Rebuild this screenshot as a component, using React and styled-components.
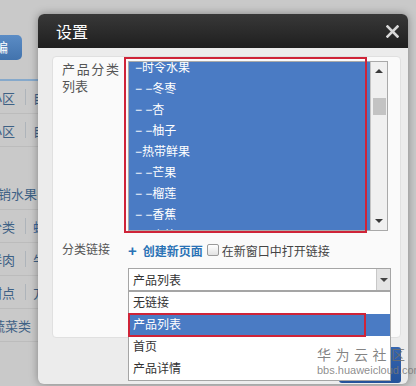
import styled, { createGlobalStyle } from "styled-components";

const FONT = `"Liberation Sans", "Noto Sans CJK SC", sans-serif`;
const BLUE = "#4a7bc4";

const GlobalStyle = createGlobalStyle`
  html, body { margin: 0; padding: 0; }
  body { background: #c9c9c9; font-family: ${FONT}; }
  * { box-sizing: border-box; }
`;

const Stage = styled.div`
  position: relative;
  width: 416px;
  height: 386px;
  overflow: hidden;
  background: #c9c9c9;
`;

// === page behind the dialog (dimmed) ===
const BackPage = styled.div`
  width: 38px;
  padding-top: 35px;
  overflow: hidden;
  font-size: 13px;
  color: #3e6185;
`;
const BackButton = styled.div`
  width: 22px;
  height: 25px;
  border-radius: 0 5px 5px 0;
  background: linear-gradient(#5b8cc5, #4273ad);
  color: #fff;
  line-height: 25px;
  text-indent: -5px;
  overflow: hidden;
  white-space: nowrap;
`;
const BackLine = styled.div`
  margin-top: 19px;
  height: 2px;
  background: #86a9cb;
`;
const BackRow = styled.div`
  height: ${(p) => p.$h || 33}px;
  display: flex;
  align-items: center;
  white-space: nowrap;
  border-bottom: ${(p) => (p.$plain ? "0" : "1px solid #bcbcbc")};
`;
const BackLead = styled.div`
  width: 15px;
  flex-shrink: 0;
  display: flex;
  justify-content: flex-end;
  overflow: hidden;
`;
const BackDivider = styled.div`
  width: 1px;
  height: 16px;
  flex-shrink: 0;
  margin: 0 7px 0 10px;
  background: #aeb4ba;
`;
const BackText = styled.span`
  margin-left: ${(p) => p.$shift || 0}px;
  color: ${(p) => p.$color || "inherit"};
`;

// === dialog ===
const Modal = styled.div`
  position: absolute;
  left: 38px;
  top: 14px;
  width: 370px;
  height: 370px;
  display: flex;
  flex-direction: column;
  border-radius: 6px;
  background: #ececec;
  box-shadow: 0 0 8px rgba(0, 0, 0, 0.35);
`;
const Header = styled.div`
  height: 34px;
  flex-shrink: 0;
  display: flex;
  align-items: center;
  justify-content: space-between;
  padding: 0 9px 0 18px;
  border-radius: 6px 6px 0 0;
  background: linear-gradient(#383838, #1f1f1f);
  color: #fff;
  font-size: 16px;
`;
const Body = styled.div`
  flex: 1;
  display: flex;
  flex-direction: column;
  padding: 8px 7px 0 14px;
`;
const Panel = styled.div`
  height: 282px;
  padding: 4px 0 0 9px;
  background: #fafafa;
  border: 1px solid #e0e0e0;
  border-radius: 4px;
`;
const FormRow = styled.div`
  display: flex;
  align-items: ${(p) => (p.$center ? "center" : "flex-start")};
  column-gap: 9px;
  margin-top: ${(p) => p.$gap || 0}px;
  height: ${(p) => (p.$h ? `${p.$h}px` : "auto")};
`;
const Label = styled.div`
  width: 57px;
  flex-shrink: 0;
  font-size: ${(p) => p.$size || 12}px;
  line-height: 17px;
  color: #555;
  text-align: justify;
`;

// multi-select list
const Listbox = styled.div`
  position: relative;
  width: 260px;
  height: 170px;
  display: flex;
  border: 1px solid #a9a9a9;
  background: #fff;
`;
const Options = styled.div`
  flex: 1;
  overflow: hidden;
  background: ${BLUE};
`;
const OptionsInner = styled.div`
  margin-top: -4px;
`;
const ListOption = styled.div`
  height: 21px;
  line-height: 21px;
  padding-left: 6px;
  color: #fff;
  font-size: 12px;
  white-space: pre;
`;
const ScrollTrack = styled.div`
  width: 17px;
  display: flex;
  flex-direction: column;
  align-items: center;
  background: #f0f0f0;
  border-left: 1px solid #c4c4c4;
`;
const ScrollArrow = styled.div`
  height: 18px;
  width: 100%;
  display: flex;
  align-items: center;
  justify-content: center;
  &::after {
    content: "";
    border-left: 4px solid transparent;
    border-right: 4px solid transparent;
    border-${(p) => (p.$down ? "top" : "bottom")}: 4px solid #3a3a3a;
  }
`;
const ScrollThumb = styled.div`
  margin-top: 18px;
  width: 13px;
  height: 17px;
  background: #c3c3c3;
`;
const ScrollFill = styled.div`
  flex: 1;
`;
const Annotation = styled.div`
  position: absolute;
  left: ${(p) => p.$l}px;
  top: ${(p) => p.$t}px;
  width: ${(p) => p.$w}px;
  height: ${(p) => p.$h}px;
  border: 2px solid #cf2438;
  pointer-events: none;
`;

// link row
const LinkBar = styled.div`
  display: flex;
  align-items: center;
  font-size: 12px;
  white-space: nowrap;
`;
const Plus = styled.span`
  color: #2a72b5;
  font-size: 15px;
  font-weight: bold;
  margin-right: 6px;
`;
const CreateLink = styled.span`
  color: #2a72b5;
  font-weight: bold;
  margin-right: 4px;
`;
const Checkbox = styled.span`
  width: 12px;
  height: 12px;
  margin-right: 3px;
  border: 1px solid #9a9a9a;
  border-radius: 2px;
  background: linear-gradient(#fff, #e2e2e2);
`;
const CheckLabel = styled.span`
  color: #444;
`;

// select with open dropdown
const SelectWrap = styled.div`
  position: relative;
  width: 263px;
`;
const SelectBox = styled.div`
  height: 23px;
  display: flex;
  align-items: center;
  padding-left: 4px;
  border: 1px solid #a5a5a5;
  background: #fff;
  font-size: 12px;
  color: #333;
`;
const SelectArrow = styled.div`
  margin-left: auto;
  width: 14px;
  align-self: stretch;
  display: flex;
  align-items: center;
  justify-content: center;
  background: #e4e4e4;
  border-left: 1px solid #c8c8c8;
  &::after {
    content: "";
    border-left: 4px solid transparent;
    border-right: 4px solid transparent;
    border-top: 4px solid #444;
  }
`;
const Dropdown = styled.div`
  position: absolute;
  top: 100%;
  left: 0;
  width: 263px;
  z-index: 2;
  background: #fff;
  border: 1px solid #a5a5a5;
`;
const DropOption = styled.div`
  position: relative;
  height: 22px;
  line-height: 22px;
  padding-left: 4px;
  font-size: 12px;
  color: ${(p) => (p.$selected ? "#fff" : "#333")};
  background: ${(p) => (p.$selected ? BLUE : "transparent")};
`;

const Footer = styled.div`
  margin-top: 9px;
  display: flex;
  justify-content: flex-end;
`;
const PrimaryButton = styled.div`
  width: 62px;
  height: 36px;
  border-radius: 3px;
  background: linear-gradient(#3465b0, #24529a);
`;

const Watermark = styled.div`
  position: absolute;
  left: 317px;
  top: 348px;
  z-index: 3;
  color: rgba(110, 110, 110, 0.85);
  line-height: 1;
`;
const WatermarkTitle = styled.div`
  font-size: 14px;
  letter-spacing: 4.5px;
`;
const WatermarkUrl = styled.div`
  margin-top: 3px;
  font-size: 11px;
  color: rgba(120, 120, 120, 0.85);
`;

const CATEGORIES = [
  "−时令水果",
  "− −冬枣",
  "− −杏",
  "− −柚子",
  "−热带鲜果",
  "− −芒果",
  "− −榴莲",
  "− −香蕉",
  "− −山竹",
];

const LINK_TYPES = ["无链接", "产品列表", "首页", "产品详情"];

const BACK_ROWS = [
  ["小区", "自"],
  ["小区", "自"],
  null,
  ["热销水果"],
  ["分类", "蛙", "#2f5f95"],
  ["鲜肉", "牛"],
  ["甜点", "方"],
  ["蔬菜类"],
];

const CloseIcon = () => (
  <svg width="13" height="13" viewBox="0 0 13 13">
    <path
      d="M1.5 1.5 L11.5 11.5 M11.5 1.5 L1.5 11.5"
      stroke="#d8d8d8"
      strokeWidth="2.6"
      strokeLinecap="square"
    />
  </svg>
);

const App = () => {
  const renderBackRow = (row, i) => {
    if (!row) return <BackRow key={i} $h={30} $plain />;
    if (row.length === 1)
      return (
        <BackRow key={i}>
          <BackText $shift={row[0].length > 3 ? -15 : -8}>{row[0]}</BackText>
        </BackRow>
      );
    return (
      <BackRow key={i}>
        <BackLead>
          <span>{row[0]}</span>
        </BackLead>
        <BackDivider />
        <BackText $color={row[2]}>{row[1]}</BackText>
      </BackRow>
    );
  };

  return (
    <Stage>
      <GlobalStyle />

      <BackPage>
        <BackButton>编</BackButton>
        <BackLine />
        {BACK_ROWS.map(renderBackRow)}
      </BackPage>

      <Modal>
        <Header>
          <span>设置</span>
          <CloseIcon />
        </Header>

        <Body>
          <Panel>
            <FormRow>
              <Label $size={13}>产品分类列表</Label>
              <Listbox>
                <Options>
                  <OptionsInner>
                    {CATEGORIES.map((c, i) => (
                      <ListOption key={i}>{c}</ListOption>
                    ))}
                  </OptionsInner>
                </Options>
                <ScrollTrack>
                  <ScrollArrow />
                  <ScrollThumb />
                  <ScrollFill />
                  <ScrollArrow $down />
                </ScrollTrack>
                <Annotation $l={-5} $t={-5} $w={243} $h={176} />
              </Listbox>
            </FormRow>

            <FormRow $gap={9} $h={20} $center>
              <Label>分类链接</Label>
              <LinkBar>
                <Plus>+</Plus>
                <CreateLink>创建新页面</CreateLink>
                <Checkbox />
                <CheckLabel>在新窗口中打开链接</CheckLabel>
              </LinkBar>
            </FormRow>

            <FormRow $gap={8}>
              <Label />
              <SelectWrap>
                <SelectBox>
                  产品列表
                  <SelectArrow />
                </SelectBox>
                <Dropdown>
                  {LINK_TYPES.map((t) => (
                    <DropOption key={t} $selected={t === "产品列表"}>
                      {t}
                      {t === "产品列表" && (
                        <Annotation $l={-1} $t={-1} $w={238} $h={24} />
                      )}
                    </DropOption>
                  ))}
                </Dropdown>
              </SelectWrap>
            </FormRow>
          </Panel>

          <Footer>
            <PrimaryButton />
          </Footer>
        </Body>
      </Modal>

      <Watermark>
        <WatermarkTitle>华为云社区</WatermarkTitle>
        <WatermarkUrl>bbs.huaweicloud.com</WatermarkUrl>
      </Watermark>
    </Stage>
  );
};

export default App;
